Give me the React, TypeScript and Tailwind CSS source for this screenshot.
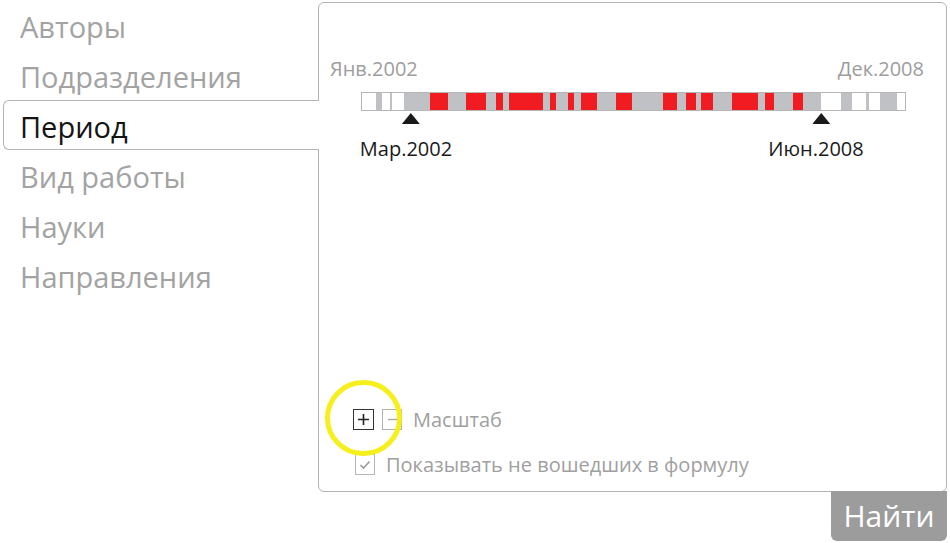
import React from 'react';

type Seg = { c: 'w' | 'g' | 'r'; w: number };

// boundaries of the period strip, in px from the strip's inner left edge
const bounds: [Seg['c'], number][] = [
  ['w', 376], ['g', 382], ['w', 390], ['g', 392], ['w', 404], ['g', 430], ['r', 448],
  ['g', 466], ['r', 486], ['g', 496], ['r', 503], ['g', 509], ['r', 543], ['g', 550],
  ['r', 556], ['g', 568], ['r', 574], ['g', 581], ['r', 597], ['g', 616], ['r', 632],
  ['g', 663], ['r', 677], ['g', 686], ['r', 696], ['g', 701], ['r', 713], ['g', 732],
  ['r', 758], ['g', 765], ['r', 774], ['g', 793], ['r', 803], ['g', 821], ['w', 841],
  ['g', 852], ['w', 866], ['g', 869], ['w', 880], ['g', 897], ['w', 905],
];

const segments: Seg[] = bounds.map(([c, end], i) => ({
  c,
  w: end - (i === 0 ? 362 : bounds[i - 1][1]),
}));

const segClass: Record<Seg['c'], string> = {
  w: 'bg-white',
  g: 'bg-[#c0c1c4]',
  r: 'bg-[#f01c22]',
};

const menu = ['Авторы', 'Подразделения', 'Период', 'Вид работы', 'Науки', 'Направления'];
const active = 'Период';

const markers = [
  { label: 'Мар.2002', at: 50 },
  { label: 'Июн.2008', at: 460 },
];

const Marker: React.FC<{ label: string; at: number }> = ({ label, at }) => (
  <div className="absolute top-[21px] flex flex-col items-center -translate-x-1/2" style={{ left: at }}>
    <svg width="18" height="11" viewBox="0 0 18 11">
      <polygon points="9,0 18,11 0,11" fill="#1a1a1a" />
    </svg>
    <span className="relative -left-[5px] mt-[13px] text-[20px] leading-[24px] text-[#1a1a1a] whitespace-nowrap">{label}</span>
  </div>
);

export default function App() {
  return (
    <div className="w-[950px] h-[543px] bg-white relative overflow-hidden font-['Open_Sans',sans-serif]">
      <div className="flex">
        <nav className="w-[315px] ml-[3px] flex flex-col">
          {menu.map((item) =>
            item === active ? (
              <div
                key={item}
                className="h-[50px] -mr-px relative z-10 bg-white border border-r-0 border-[#b4b4b4] rounded-l-md pl-[16px] pt-[3px] flex items-center text-[29px] text-[#141414]"
              >
                {item}
              </div>
            ) : (
              <div key={item} className="h-[50px] pl-[17px] pt-[4px] flex items-center text-[29px] text-[#a3a3a3]">
                {item}
              </div>
            )
          )}
        </nav>

        <div className="mt-[2px] w-[629px] h-[490px] border border-[#b4b4b4] rounded-md flex flex-col">
          <div className="pt-[54px] pl-[11px] pr-[22px]">
            <div className="flex justify-between text-[20px] leading-[24px] text-[#9d9d9d]">
              <span>Янв.2002</span>
              <span>Дек.2008</span>
            </div>
            <div className="relative ml-[31px] mt-[11px] w-[545px]">
              <div className="flex h-[19px] border border-[#b6b6b6]">
                {segments.map((s, i) => (
                  <div key={i} className={segClass[s.c]} style={{ width: s.w }} />
                ))}
              </div>
              {markers.map((m) => (
                <Marker key={m.label} {...m} />
              ))}
            </div>
          </div>

          <div className="mt-auto pl-[34px] pb-[15px] flex flex-col gap-[22px] text-[20px] leading-[23px] text-[#a0a0a0]">
            <div className="flex items-center">
              <span className="w-[21px] h-[21px] border-[1.5px] border-[#333] flex items-center justify-center">
                <svg width="13" height="13" viewBox="0 0 13 13">
                  <path d="M6.5 1v11M1 6.5h11" stroke="#222" strokeWidth="1.6" />
                </svg>
              </span>
              <span className="ml-[8px] w-[20px] h-[21px] border-[1.5px] border-[#b0b0b0] flex items-center justify-center">
                <svg width="11" height="11" viewBox="0 0 11 11">
                  <path d="M1 5.5h9" stroke="#aaa" strokeWidth="1.4" />
                </svg>
              </span>
              <span className="ml-[11px]">Масштаб</span>
            </div>
            <div className="flex items-center">
              <span className="ml-[2px] w-[20px] h-[21px] border-[1.5px] border-[#b6b6b6] flex items-center justify-center">
                <svg width="12" height="10" viewBox="0 0 12 10">
                  <path d="M1.5 5l3 3 6-6.5" fill="none" stroke="#999" strokeWidth="1.6" />
                </svg>
              </span>
              <span className="ml-[11px]">Показывать не вошедших в формулу</span>
            </div>
          </div>
        </div>
      </div>

      <div className="flex justify-end pr-[3px]">
        <button className="w-[116px] h-[50px] -mt-px bg-[#9c9c9c] rounded-b-md text-white text-[30px] leading-none flex items-center justify-center">
          Найти
        </button>
      </div>

      <div className="absolute left-[325px] top-[380px] w-[77px] h-[76px] rounded-full border-[5px] border-[#f6ef1c]" />
    </div>
  );
}
